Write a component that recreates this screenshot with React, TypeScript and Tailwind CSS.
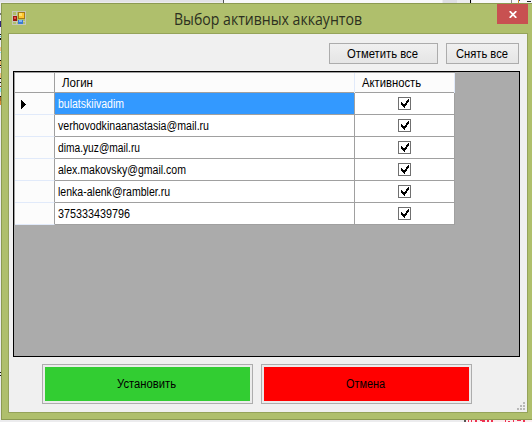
import React from "react";

const rows = [
  { login: "bulatskiivadim", width: 66 },
  { login: "verhovodkinaanastasia@mail.ru", width: 151 },
  { login: "dima.yuz@mail.ru", width: 82 },
  { login: "alex.makovsky@gmail.com", width: 128 },
  { login: "lenka-alenk@rambler.ru", width: 112 },
  { login: "375333439796", width: 72 },
];

function Label({ text, width, size = 12, baseline = 14, fill = "#000" }: { text: string; width: number; size?: number; baseline?: number; fill?: string }) {
  return (
    <svg width={width} height={20} className="block shrink-0 overflow-visible">
      <text x="0" y={baseline} fontSize={size} fill={fill} textLength={width} lengthAdjust="spacingAndGlyphs">{text}</text>
    </svg>
  );
}

function Check() {
  return (
    <svg width="13" height="13" viewBox="0 0 13 13" shapeRendering="crispEdges">
      <rect x="0.5" y="0.5" width="12" height="12" fill="#fff" stroke="#707070" />
      <path d="M3 5h1v3h-1zM4 6h1v3h-1zM5 7h1v3h-1zM6 7h1v4h-1zM7 6h1v3h-1zM8 4h1v4h-1zM9 3h1v3h-1zM10 2h1v3h-1z" fill="#000" />
    </svg>
  );
}

function AppIcon() {
  return (
    <svg width="14" height="14" shapeRendering="crispEdges">
      <path d="M.5.5h13v13H.5zM4.5 0v14M0 4.5h5M0 10.5h14" fill="none" stroke="#c5c7b8" />
      <rect x="6" y="1" width="7" height="7" fill="#a57a14" />
      <rect x="7" y="2" width="5" height="5" fill="#ffc52c" />
      <rect x="7" y="2" width="3" height="3" fill="#ffe169" />
      <rect x="1" y="5" width="4" height="5" fill="#9b1712" />
      <rect x="2" y="6" width="2" height="2" fill="#df5146" />
      <rect x="6" y="9" width="5" height="4" fill="#397bd2" />
      <rect x="7" y="9" width="3" height="2" fill="#82b5f5" />
    </svg>
  );
}

const leftSpecks: [number, number, string][] = [
  [13, 2, "#777"], [21, 6, "#33267a"], [34, 1, "#111"], [36, 1, "#54c8d8"], [38, 2, "#111"],
  [47, 4, "#efc48a"], [52, 1, "#8ee6ee"], [60, 1, "#111"], [61, 4, "#e7b66b"], [65, 1, "#111"], [67, 1, "#a66526"],
  [73, 5, "#f0c080"], [78, 1, "#111"], [82, 1, "#111"], [86, 1, "#7a3a18"], [88, 4, "#8ee6ee"],
  [96, 1, "#111"], [97, 4, "#a66526"], [101, 4, "#dc8a34"], [372, 1, "#111"], [375, 1, "#111"],
];

const bottomSpecks = [
  "M468 420h1v2h-1zM471 420h1v2h-1zM475 420h2v2h-2z",
  "M480 420h5v1h-5zM482 421h3v1h-3zM487 420h2v2h-2zM491 420h2v2h-2z",
  "M505 420h1v2h-1zM508 421h2v1h-2zM513 420h1v2h-1zM517 420h4v1h-4zM523 420h2v2h-2z",
];

function Backdrop() {
  return (
    <svg className="absolute inset-0" width="532" height="422" shapeRendering="crispEdges">
      <rect width="532" height="422" fill="#ececee" />
      <rect width="223" height="2" fill="#e2e2e6" />
      <rect x="224" width="218" height="3" fill="#f8f8fa" />
      <rect x="223" width="1" height="3" fill="#555" />
      <rect x="470" width="1" height="3" fill="#000" />
      <rect x="443" width="14" height="3" fill="#dedee3" />
      <rect x="472" width="60" height="3" fill="#f8f8fa" />
      <rect x="511" width="1" height="3" fill="#888" />
      <rect x="518" width="1" height="3" fill="#d49330" />
      <rect x="519" width="1" height="1" fill="#26378c" />
      <rect x="527" y="1" width="4" height="1" fill="#222" />
      {leftSpecks.map(([y, h, color]) => <rect key={y} y={y} width="1" height={h} fill={color} />)}
      <rect x="464" y="420" width="2" height="2" fill="#555" />
      <rect x="466" y="420" width="66" height="2" fill="#fbeef0" />
      {bottomSpecks.map((d) => <path key={d} d={d} fill="#ee3350" />)}
    </svg>
  );
}

export default function App() {
  return (
    <div className="relative h-[422px] w-[532px] overflow-hidden font-['Liberation_Sans',sans-serif] text-[11px]">
      <Backdrop />
      <main className="relative ml-px flex h-[420px] flex-col pt-[3px]">
        <div className="flex h-[417px] w-[531px] flex-col border border-r-0 border-[#8c9a52] bg-[#afbf6c]">
          <header className="flex h-[29px] shrink-0 items-start">
            <div className="ml-[10px] mt-[7px]"><AppIcon /></div>
            <h1 className="ml-[148px] mt-[5px] h-5 w-[188px] font-['Open_Sans',sans-serif]"><Label text="Выбор активных аккаунтов" width={188} size={15.5} baseline={15.5} fill="#2c3020" /></h1>
            <button className="ml-[135px] flex h-5 w-[31px] items-center justify-center bg-[#c85151]">
              <svg width="8" height="7" viewBox="0 0 8 7"><path d="M.7.2l6.6 6.6M7.3.2L.7 6.8" stroke="#fff" strokeWidth="1.8" /></svg>
            </button>
          </header>
          <section className="relative ml-[6px] flex h-[380px] w-[520px] flex-col border border-[#95a35a] bg-[#f0f0f0]">
            <div className="flex h-[37px] shrink-0 gap-2 pl-[320px] pt-[9px]">
              <button className="flex h-[21px] w-[109px] justify-center border border-[#acacac] bg-linear-to-b from-[#f0f0f0] to-[#e5e5e5] pr-[2px]"><Label text="Отметить все" width={71} /></button>
              <button className="flex h-[21px] w-[73px] justify-center border border-[#acacac] bg-linear-to-b from-[#f0f0f0] to-[#e5e5e5] pr-[2px]"><Label text="Снять все" width={52} /></button>
            </div>
            <div className="ml-1 h-[286px] w-[507px] shrink-0 border border-black bg-[#ababab]">
              <div className="w-[441px] border-l border-t border-[#a0a0a0]">
                <div className="grid h-5 grid-cols-[40px_300px_100px] border-b border-[#a0a0a0] bg-[#fcfcfc]">
                  <span className="border-r border-[#a0a0a0]" />
                  <span className="border-r border-[#e1eafa] pl-[7px]"><Label text="Логин" width={31} /></span>
                  <span className="border-r border-[#e1eafa] pl-[7px]"><Label text="Активность" width={59} /></span>
                </div>
                {rows.map((row, i) => (
                  <div key={row.login} className="grid h-[22px] grid-cols-[40px_300px_100px]">
                    <span className="flex items-center border-b border-r border-b-[#e1eafa] border-r-[#a0a0a0] bg-[#fcfcfc] pl-[6px] pt-px">
                      {i === 0 && <svg width="5" height="9" shapeRendering="crispEdges"><path d="M0 0l5 4.5L0 9z" /></svg>}
                    </span>
                    <span className={`border-b border-r border-[#a0a0a0] pl-[3px] ${i === 0 ? "bg-[#3399ff]" : "bg-white"}`}><Label text={row.login} width={row.width} baseline={15} fill={i === 0 ? "#fff" : "#000"} /></span>
                    <span className="flex items-center justify-center border-b border-r border-[#a0a0a0] bg-white"><Check /></span>
                  </div>
                ))}
              </div>
            </div>
            <div className="flex gap-2 pl-[33px] pt-[7px]">
              <button className="h-10 w-[211px] border border-[#adadad] bg-[#ebebeb] p-[2px]"><span className="flex h-full items-center justify-center bg-[#32cd32] pr-[2px]"><Label text="Установить" width={59} /></span></button>
              <button className="h-10 w-[211px] border border-[#adadad] bg-[#ebebeb] p-[2px]"><span className="flex h-full items-center justify-center bg-[#ff0000] pr-[2px]"><Label text="Отмена" width={39} /></span></button>
            </div>
            <svg className="absolute bottom-[2px] right-[2px]" width="8" height="8" fill="#b8b8b8" shapeRendering="crispEdges"><path d="M6 0h2v2H6zM3 3h2v2H3zM6 3h2v2H6zM0 6h2v2H0zM3 6h2v2H3zM6 6h2v2H6z" /></svg>
          </section>
        </div>
      </main>
    </div>
  );
}
